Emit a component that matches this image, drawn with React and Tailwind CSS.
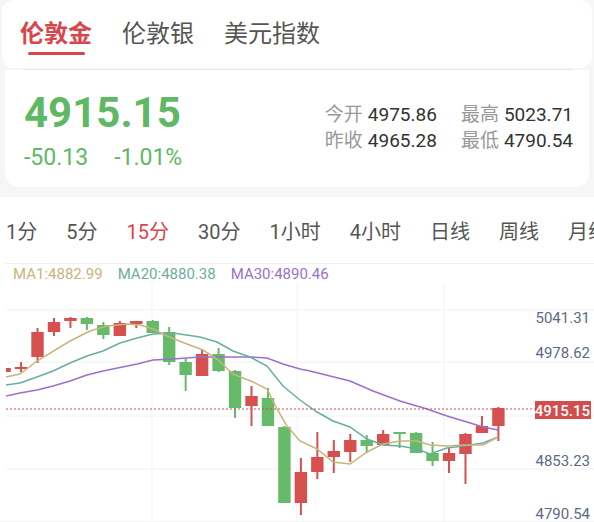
import React from "react";

const RED = "#d65050";
const GREEN = "#65bb6a";

// [bodyTop, bodyBottom, wickTop, wickBottom, up]
const candles = [
  [369, 373, 369, 373, 1],
  [368, 370, 363, 373, 1],
  [333, 358, 329, 364, 1],
  [323, 333, 319, 337, 1],
  [319, 322, 318, 329, 1],
  [319, 325, 318, 331, 0],
  [326, 336, 323, 340, 0],
  [324, 337, 322, 337, 1],
  [322, 325, 322, 329, 1],
  [322, 334, 321, 334, 0],
  [333, 363, 328, 366, 0],
  [363, 376, 360, 392, 0],
  [355, 377, 351, 377, 1],
  [355, 372, 349, 373, 0],
  [372, 409, 371, 419, 0],
  [397, 407, 387, 427, 1],
  [399, 427, 389, 427, 0],
  [428, 504, 427, 504, 0],
  [473, 504, 459, 516, 1],
  [458, 473, 433, 480, 1],
  [452, 458, 441, 474, 1],
  [441, 453, 435, 463, 1],
  [441, 447, 436, 454, 0],
  [435, 446, 431, 446, 1],
  [433, 435, 433, 449, 0],
  [434, 454, 433, 454, 0],
  [454, 462, 443, 467, 0],
  [454, 462, 449, 474, 1],
  [435, 455, 434, 485, 1],
  [427, 434, 417, 434, 1],
  [409, 427, 408, 442, 1],
];

const ma1 =
  "6,378 20,375 37,362 70,342 90,332 107,327 127,325 140,326 153,330 167,337 187,345 203,351 217,360 233,375 253,383 267,390 277,410 287,427 300,442 317,450 333,463 350,465 367,453 383,445 400,442 417,442 430,446 447,447 463,446 483,446 498,438";
const ma20 =
  "6,386 20,384 37,378 53,372 70,364 87,357 103,352 120,344 137,339 153,335 173,334 200,338 217,343 233,352 250,358 267,367 283,387 300,401 317,413 333,422 350,428 367,440 383,446 400,447 417,450 430,455 447,449 463,447 483,444 498,438";
const ma30 =
  "6,397 20,394 37,391 53,387 70,382 87,376 103,372 137,365 153,361 173,360 200,358 233,358 250,358 267,359 283,365 300,370 310,372 350,382 373,392 400,402 427,410 447,417 467,423 483,428 498,431";

const periods = ["1分", "5分", "15分", "30分", "1小时", "4小时", "日线", "周线", "月线"];

function Chart() {
  return (
    <svg width="594" height="238" viewBox="0 284 594 238" className="block">
      <defs>
        <clipPath id="plot">
          <rect x="6" y="284" width="530" height="238" />
        </clipPath>
      </defs>
      {[311, 363, 417, 470].map((y) => (
        <line key={y} x1="6" x2="594" y1={y} y2={y} stroke="#f1f1f1" strokeWidth="1" />
      ))}
      {[152, 297, 444].map((x) => (
        <line key={x} x1={x} x2={x} y1="284" y2="522" stroke="#f3f3f3" strokeWidth="1" />
      ))}
      <g clipPath="url(#plot)">
        {candles.map((c, i) => {
          const cx = 4.6 + 16.46 * i;
          const col = c[4] ? RED : GREEN;
          return (
            <g key={i}>
              <rect x={cx - 1} y={c[2]} width="2" height={Math.max(c[3] - c[2], 1)} fill={col} />
              <rect x={cx - 6.2} y={c[0]} width="12.4" height={Math.max(c[1] - c[0], 2)} fill={col} />
            </g>
          );
        })}
        <polyline points={ma30} fill="none" stroke="#9b6fcc" strokeWidth="1.5" />
        <polyline points={ma20} fill="none" stroke="#6aaea0" strokeWidth="1.5" />
        <polyline points={ma1} fill="none" stroke="#c9b37f" strokeWidth="1.5" />
      </g>
      <line x1="6" x2="536" y1="410" y2="410" stroke="#d84848" strokeWidth="1.2" strokeDasharray="2 2" />
      <g fontFamily="Roboto, sans-serif" fontSize="15" fill="#5d6983" textAnchor="end">
        <text x="590" y="324">5041.31</text>
        <text x="590" y="359">4978.62</text>
        <text x="590" y="467">4853.23</text>
        <text x="590" y="520">4790.54</text>
      </g>
      <rect x="535" y="402" width="56" height="18" fill="#d54c4c" />
      <text x="590" y="416.5" fontFamily="Roboto, sans-serif" fontSize="15" fontWeight="500" fill="#fff" textAnchor="end">
        4915.15
      </text>
    </svg>
  );
}

export default function App() {
  return (
    <div className="w-[594px] h-[522px] overflow-hidden bg-[#f6f6f6] font-['Roboto','Noto_Sans_CJK_SC',sans-serif]">
      {/* top tabs */}
      <div className="mx-[2px] h-[68px] bg-white rounded-xl flex gap-[30px] pl-[18px] pt-[22px]">
        <div className="flex flex-col items-center">
          <span className="text-[24px] leading-[24px] font-bold text-[#d8464b]">伦敦金</span>
          <span className="mt-[6px] w-[57px] h-[3px] rounded-full bg-[#d8464b]" />
        </div>
        <span className="text-[24px] leading-[24px] text-[#555]">伦敦银</span>
        <span className="text-[24px] leading-[24px] text-[#555]">美元指数</span>
      </div>
      <div className="mx-[22px] h-px bg-[#e9e9e9] mt-px" />

      {/* quote card */}
      <div className="mx-[5px] h-[117px] bg-white rounded-b-[14px] flex justify-between items-start">
        <div className="pl-[19px] pt-[22px]">
          <div className="text-[42px] leading-[42px] font-bold text-[#5fb864]">4915.15</div>
          <div className="mt-[12px] flex gap-[26px] text-[23px] leading-[23px] text-[#5fb864]">
            <span>-50.13</span>
            <span>-1.01%</span>
          </div>
        </div>
        <div className="pt-[32px] pr-[16px] grid grid-cols-[auto_auto] content-start gap-x-[24px] text-[19px] leading-[26px]">
          <div className="flex gap-[5px]">
            <span className="text-[#999]">今开</span>
            <span className="text-[#333]">4975.86</span>
          </div>
          <div className="flex gap-[5px]">
            <span className="text-[#999]">最高</span>
            <span className="text-[#333]">5023.71</span>
          </div>
          <div className="flex gap-[5px]">
            <span className="text-[#999]">昨收</span>
            <span className="text-[#333]">4965.28</span>
          </div>
          <div className="flex gap-[5px]">
            <span className="text-[#999]">最低</span>
            <span className="text-[#333]">4790.54</span>
          </div>
        </div>
      </div>

      {/* chart section */}
      <div className="mt-[10px] bg-white">
        <div className="h-[66px] pt-[3px] flex items-center gap-[29px] pl-[6px] whitespace-nowrap overflow-hidden">
          {periods.map((p) => (
            <span
              key={p}
              className={"shrink-0 text-[20px] leading-[20px] " + (p === "15分" ? "text-[#d8464b]" : "text-[#555]")}
            >
              {p}
            </span>
          ))}
        </div>
        <div className="ml-[5px] h-px bg-[#efefef]" />
        <div className="h-[17px] mt-[2px] flex gap-[15px] pl-[13px] text-[15px] leading-[17px]">
          <span className="text-[#c9b37f]">MA1:4882.99</span>
          <span className="text-[#6aaea0]">MA20:4880.38</span>
          <span className="text-[#9b6fcc]">MA30:4890.46</span>
        </div>
        <Chart />
      </div>
    </div>
  );
}
